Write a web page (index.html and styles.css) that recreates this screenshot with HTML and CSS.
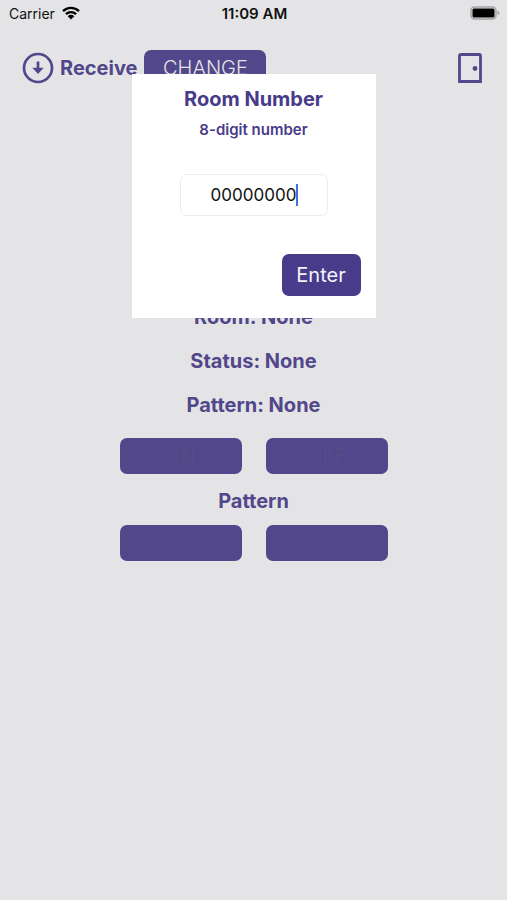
FILE: index.html
```html
<!DOCTYPE html>
<html lang="en">
<head>
<meta charset="utf-8">
<meta name="viewport" content="width=device-width, initial-scale=1">
<title>Receive</title>
<link rel="stylesheet" href="styles.css">
</head>
<body>
<div class="status-bar">
  <div class="carrier">
    <span>Carrier</span>
    <svg class="wifi" viewBox="0 0 18 14" aria-hidden="true">
      <path d="M1 5.2a11.4 11.4 0 0 1 16 0M3.9 8.2a7.3 7.3 0 0 1 10.2 0" fill="none" stroke="currentColor" stroke-width="2.4"/>
      <path d="M5.7 10.2a4.7 4.7 0 0 1 6.6 0L9 13.6z" fill="currentColor"/>
    </svg>
  </div>
  <time class="clock">11:09 AM</time>
  <svg class="battery" viewBox="0 0 30 14" aria-hidden="true">
    <rect x="1" y="1" width="25" height="12" rx="3.5" fill="none" stroke="#a3a3a5" stroke-width="1.5"/>
    <rect x="2.5" y="2.5" width="22" height="9" rx="1.5" fill="#000"/>
    <path d="M27.5 4.8c2.6 1 2.6 3.4 0 4.4z" fill="#a3a3a5"/>
  </svg>
</div>

<header class="top-bar">
  <svg class="receive-icon" viewBox="0 0 32 32" aria-hidden="true">
    <circle cx="16" cy="16" r="14" fill="none" stroke="currentColor" stroke-width="2.7"/>
    <path d="M16 9.5v8" stroke="currentColor" stroke-width="2.7"/>
    <path d="M10.3 15.7h11.4L16 21.9z" fill="currentColor"/>
  </svg>
  <h1 class="label">Receive</h1>
  <button class="button change" type="button">CHANGE</button>
  <button class="room-button" type="button" aria-label="Room">
    <svg class="door" viewBox="0 0 26 32" aria-hidden="true">
      <path d="M2.5 29.5V4q0-1.5 1.5-1.5h18q1.5 0 1.5 1.5v25.5z" fill="none" stroke="currentColor" stroke-width="2.8"/>
      <circle cx="18" cy="16.5" r="2.4" fill="currentColor"/>
    </svg>
  </button>
</header>

<main class="content">
  <p class="label info">Room: None</p>
  <p class="label info">Status: None</p>
  <p class="label info">Pattern: None</p>
  <div class="button-row">
    <button class="button" type="button" disabled>ON</button>
    <button class="button" type="button" disabled>OFF</button>
  </div>
  <h2 class="label pattern-title">Pattern</h2>
  <div class="button-row">
    <button class="button" type="button" disabled></button>
    <button class="button" type="button" disabled></button>
  </div>
</main>

<div class="overlay">
  <form class="dialog" role="dialog" aria-labelledby="dialog-title">
    <h2 class="label" id="dialog-title">Room Number</h2>
    <label class="hint" for="room">8-digit number</label>
    <div class="field">
      <input class="room-input" id="room" type="text" inputmode="numeric" maxlength="8" value="00000000">
      <span class="caret"></span>
    </div>
    <button class="button enter" type="button">Enter</button>
  </form>
</div>
</body>
</html>
```
FILE: styles.css
```css
* {
  box-sizing: border-box;
}

body {
  position: relative;
  min-height: 100vh;
  margin: 0;
  background: #e4e4e6;
  color: #51478a;
  font-family: Inter, "Liberation Sans", sans-serif;
}

h1, h2, p {
  margin: 0;
}

svg {
  display: block;
}

.status-bar {
  display: grid;
  grid-template-columns: 1fr auto 1fr;
  align-items: center;
  height: 26px;
  padding: 0 7px 0 9px;
  color: #111;
  font-size: 14px;
}

.carrier {
  display: flex;
  align-items: center;
  gap: 7px;
}

.wifi {
  width: 18px;
  height: 14px;
  color: #000;
}

.clock {
  font-size: 15px;
  font-weight: 600;
}

.battery {
  justify-self: end;
  width: 30px;
  height: 14px;
}

.top-bar {
  display: flex;
  align-items: center;
  margin-top: 24px;
  padding: 0 24px 0 22px;
}

.receive-icon {
  width: 32px;
  height: 32px;
  margin-right: 6px;
}

.label {
  font-size: 20px;
  font-weight: 700;
  line-height: 26px;
}

.button {
  width: 122px;
  height: 36px;
  padding: 0;
  border: 0;
  border-radius: 7px;
  background: #51478a;
  color: #e4e4e6;
  font-family: inherit;
  font-size: 20px;
}

.button:disabled {
  color: #564b86;
}

.change {
  margin-left: 7px;
  font-weight: 300;
}

.room-button {
  margin-left: auto;
  padding: 0;
  border: 0;
  background: none;
  color: inherit;
}

.door {
  width: 26px;
  height: 32px;
}

.content {
  display: flex;
  flex-direction: column;
  align-items: center;
  padding-top: 218px;
}

.info {
  margin-bottom: 18px;
}

.button-row {
  display: flex;
  gap: 24px;
  margin-top: 2px;
}

.pattern-title {
  margin: 14px 0 9px;
}

.overlay {
  position: absolute;
  inset: 0;
  padding-top: 74px;
}

.dialog {
  display: flex;
  flex-direction: column;
  align-items: center;
  width: 244px;
  margin: 0 auto;
  padding: 12px 15px 22px;
  background: #fff;
  color: #483b89;
}

.hint {
  margin-top: 8px;
  font-size: 15px;
  font-weight: 600;
  line-height: 20px;
}

.field {
  position: relative;
  margin-top: 34px;
}

.room-input {
  display: block;
  width: 148px;
  height: 42px;
  padding: 0;
  border: 1px solid #ececee;
  border-radius: 7px;
  background: #fff;
  color: #111;
  font-family: inherit;
  font-size: 17px;
  text-align: center;
  outline: 0;
}

.caret {
  position: absolute;
  top: 10px;
  right: 30px;
  width: 2px;
  height: 22px;
  background: #4470e0;
}

.enter {
  align-self: flex-end;
  width: 79px;
  height: 42px;
  margin-top: 38px;
  background: #483b89;
  color: #f4f3fa;
}
```
